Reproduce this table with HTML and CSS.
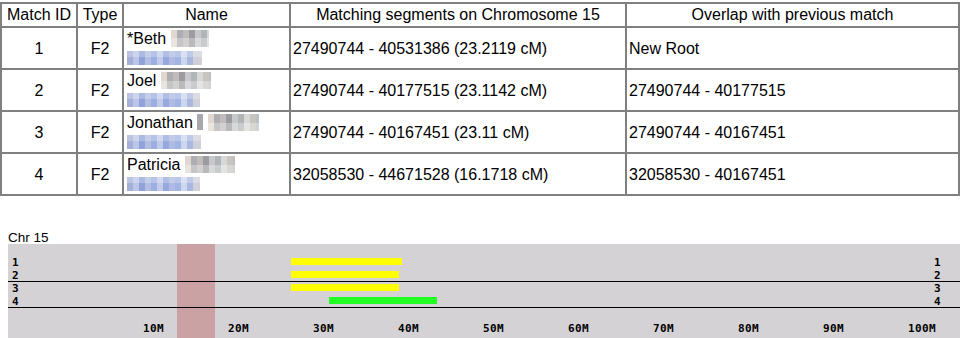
FILE: index.html
```html
<!DOCTYPE html>
<html>
<head>
<meta charset="utf-8">
<link rel="stylesheet" href="styles.css">
</head>
<body>
<table class="matches">
  <colgroup>
    <col class="c-id"><col class="c-type"><col class="c-name"><col class="c-seg"><col class="c-ovl">
  </colgroup>
  <thead>
    <tr><th>Match ID</th><th>Type</th><th>Name</th><th>Matching segments on Chromosome 15</th><th>Overlap with previous match</th></tr>
  </thead>
  <tbody>
    <tr>
      <td class="num">1</td><td class="num">F2</td>
      <td class="name">*Beth <span class="blur sur s1"></span><br><span class="blur link l1"></span></td>
      <td>27490744 - 40531386 (23.2119 cM)</td><td>New Root</td>
    </tr>
    <tr>
      <td class="num">2</td><td class="num">F2</td>
      <td class="name">Joel <span class="blur sur s2"></span><br><span class="blur link l2"></span></td>
      <td>27490744 - 40177515 (23.1142 cM)</td><td>27490744 - 40177515</td>
    </tr>
    <tr>
      <td class="num">3</td><td class="num">F2</td>
      <td class="name">Jonathan <span class="blur mid"></span> <span class="blur sur s3"></span><br><span class="blur link l3"></span></td>
      <td>27490744 - 40167451 (23.11 cM)</td><td>27490744 - 40167451</td>
    </tr>
    <tr>
      <td class="num">4</td><td class="num">F2</td>
      <td class="name">Patricia <span class="blur sur s4"></span><br><span class="blur link l4"></span></td>
      <td>32058530 - 44671528 (16.1718 cM)</td><td>32058530 - 40167451</td>
    </tr>
  </tbody>
</table>

<section class="chrom">
  <div class="chr-label">Chr 15</div>
  <svg class="chr-canvas" width="952" height="100" viewBox="0 0 952 100">
    <rect x="0" y="0" width="952" height="100" fill="#d4d2d5"/>
    <rect x="169" y="0" width="38" height="100" fill="#cba2a4"/>
    <rect x="0" y="37" width="952" height="1" fill="#000"/>
    <rect x="0" y="63" width="952" height="1" fill="#000"/>
    <rect x="283" y="14" width="111" height="7" fill="#ffff00"/>
    <rect x="283" y="27" width="108" height="7" fill="#ffff00"/>
    <rect x="283" y="40" width="108" height="7" fill="#ffff00"/>
    <rect x="321" y="53" width="108" height="7" fill="#22ff22"/>
    <g class="lbl">
      <text x="4" y="22">1</text>
      <text x="4" y="35">2</text>
      <text x="4" y="48">3</text>
      <text x="4" y="61">4</text>
      <text x="926" y="22">1</text>
      <text x="926" y="35">2</text>
      <text x="926" y="48">3</text>
      <text x="926" y="61">4</text>
      <text x="135" y="88">10M</text>
      <text x="220" y="88">20M</text>
      <text x="305" y="88">30M</text>
      <text x="390" y="88">40M</text>
      <text x="475" y="88">50M</text>
      <text x="560" y="88">60M</text>
      <text x="645" y="88">70M</text>
      <text x="730" y="88">80M</text>
      <text x="815" y="88">90M</text>
      <text x="900" y="88">100M</text>
    </g>
  </svg>
</section>
</body>
</html>
```
FILE: styles.css
```css
html, body {
  margin: 0;
  padding: 0;
  background: #fff;
  overflow: hidden;
}
body {
  font-family: "Liberation Sans", Arial, sans-serif;
  color: #000;
}
.matches {
  border-collapse: collapse;
  table-layout: fixed;
  width: 960px;
  margin-top: 2px;
  font-size: 16px;
  line-height: 19px;
}
.matches th,
.matches td {
  border: 2px solid #808080;
  padding: 1px 2px;
  vertical-align: middle;
}
.matches th {
  font-weight: normal;
  text-align: center;
  white-space: nowrap;
  line-height: 19px;
  padding: 1px 2px 2px;
}
.c-id { width: 76px; }
.c-type { width: 46px; }
.c-name { width: 167px; }
.c-seg { width: 336px; }
.matches td.num { text-align: center; }
.matches td { text-align: left; white-space: nowrap; }
.matches td.name { padding-left: 3px; }

.blur {
  display: inline-block;
  vertical-align: top;
}
.sur {
  height: 17px;
  margin-top: 1px;
  background-image:
    linear-gradient(180deg, rgba(255,255,255,0) 0 50%, rgba(255,255,255,0.3) 50% 100%),
    linear-gradient(90deg, #e0d8d0 0 6px, #aeaeb2 6px 12px, #c0bcbc 12px 18px, #9c9ca0 18px 24px, #c8c8cc 24px 30px, #b0b6b6 30px 36px, #d8d8d8 36px 42px, #c8c4c0 42px 48px, #bcc0c4 48px 54px);
}
.s1 { width: 38px; }
.s2 { width: 50px; }
.s3 { width: 51px; }
.s4 { width: 50px; }
.mid {
  width: 6px;
  height: 16px;
  margin-top: 1px;
  background: #a8a8ac;
}
.link {
  width: 73px;
  height: 14px;
  margin-top: 3px;
  background-image:
    linear-gradient(180deg, rgba(255,255,255,0.25) 0 45%, rgba(255,255,255,0) 45% 100%),
    linear-gradient(90deg, #a4b0d8 0 6px, #bcc6e6 6px 12px, #90a2da 12px 18px, #b2bee2 18px 24px, #9cafe0 24px 30px, #c2cbea 30px 36px, #96a8dc 36px 42px, #aebbe2 42px 48px, #a2b4e4 48px 54px, #ccd6ee 54px 60px, #aab8e0 60px 66px, #d0d0da 66px 73px);
}
.l1 { width: 75px; }
.l3 { width: 74px; }

.chrom {
  padding-left: 8px;
  margin-top: 35px;
}
.chr-label {
  font-size: 13.5px;
  line-height: 13px;
  height: 13px;
}
.chr-canvas {
  display: block;
}
.lbl text {
  font-family: "DejaVu Sans Mono", "Liberation Mono", monospace;
  font-weight: bold;
  font-size: 11px;
  letter-spacing: 0.4px;
  fill: #000;
}
```
